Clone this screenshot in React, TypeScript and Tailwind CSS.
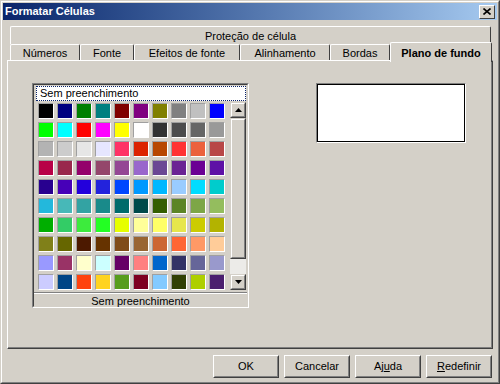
const swatches: string[][] = [
  ['#000000', '#000080', '#008000', '#008080', '#800000', '#800080', '#808000', '#808080', '#c0c0c0', '#0000ff'],
  ['#00ff00', '#00ffff', '#ff0000', '#ff00ff', '#ffff00', '#ffffff', '#333333', '#4c4c4c', '#666666', '#999999'],
  ['#b3b3b3', '#cccccc', '#e6e6e6', '#e6e6ff', '#ff3366', '#dc2300', '#b84700', '#ff3333', '#eb613d', '#b84747'],
  ['#b80047', '#99284c', '#94006b', '#94476b', '#944794', '#9966cc', '#6b4794', '#6b2394', '#6b0094', '#5e11a6'],
  ['#28008f', '#4700b8', '#2300dc', '#2323dc', '#0047ff', '#0099ff', '#00b8ff', '#99ccff', '#00dcff', '#00cccc'],
  ['#23b8dc', '#47b8b8', '#33a3a3', '#198a8a', '#006b6b', '#004a4a', '#355e00', '#5c8526', '#7da647', '#94bd5e'],
  ['#00ae00', '#33cc66', '#3deb3d', '#23ff23', '#e6ff00', '#ffff99', '#ffff66', '#e6e64c', '#cccc00', '#b3b300'],
  ['#808019', '#666600', '#4c1900', '#663300', '#804c19', '#996633', '#cc6633', '#ff6633', '#ff9966', '#ffcc99'],
  ['#9999ff', '#993366', '#ffffcc', '#ccffff', '#660066', '#ff8080', '#0066cc', '#333366', '#666699', '#9999cc'],
  ['#ccccff', '#004586', '#ff420e', '#ffd320', '#579d1c', '#7e0021', '#83caff', '#314004', '#aecf00', '#4b1f6f'],
];

const tabs = [
  { label: 'Números', w: 'w-[70px]' },
  { label: 'Fonte', w: 'w-[54px]' },
  { label: 'Efeitos de fonte', w: 'w-[106px]' },
  { label: 'Alinhamento', w: 'w-[90px]' },
  { label: 'Bordas', w: 'w-[60px]' },
];

function Arrow({ up }: { up?: boolean }) {
  return (
    <svg width="7" height="4" viewBox="0 0 7 4">
      {up ? <polygon points="0,4 7,4 3.5,0" fill="#000" /> : <polygon points="0,0 7,0 3.5,4" fill="#000" />}
    </svg>
  );
}

function ScrollButton({ up }: { up?: boolean }) {
  return (
    <div className="w-[16px] h-[16px] border border-t-[#d4d0c8] border-l-[#d4d0c8] border-r-[#404040] border-b-[#404040] bg-[#d4d0c8]">
      <div className="w-full h-full border border-t-white border-l-white border-r-[#808080] border-b-[#808080] flex items-center justify-center">
        <Arrow up={up} />
      </div>
    </div>
  );
}

function Button({ children }: { children: React.ReactNode }) {
  return (
    <div className="w-[66px] h-[23px] border border-t-white border-l-white border-r-[#404040] border-b-[#404040]">
      <div className="w-full h-full border border-t-[#d4d0c8] border-l-[#d4d0c8] border-r-[#808080] border-b-[#808080] flex items-center justify-center text-[11px] text-black">
        {children}
      </div>
    </div>
  );
}

export default function App() {
  return (
    <div className="w-[500px] h-[384px] bg-[#d4d0c8] border border-t-[#d4d0c8] border-l-[#d4d0c8] border-r-[#404040] border-b-[#404040] font-['Liberation_Sans'] text-[11px] text-black select-none">
      <div className="h-full border border-t-white border-l-white border-r-[#808080] border-b-[#808080] p-px">
        {/* title bar */}
        <div className="h-[17px] flex items-center justify-between bg-gradient-to-r from-[#0a246a] to-[#a6caf0] pl-[2px] pr-[2px]">
          <span className="text-white font-bold text-[11px] leading-none">Formatar Células</span>
          <div className="w-[16px] h-[14px] bg-[#d4d0c8] border border-t-white border-l-white border-r-[#404040] border-b-[#404040] flex items-center justify-center">
            <svg width="8" height="7" viewBox="0 0 8 7">
              <path d="M0.5 0.5 L7.5 6.5 M7.5 0.5 L0.5 6.5" stroke="#000" strokeWidth="1.6" />
            </svg>
          </div>
        </div>

        <div className="mx-[4px] mt-[6px]">
          {/* back tab row */}
          <div className="ml-[3px] w-[481px] h-[18px] border-t border-l border-r border-t-white border-l-white border-r-[#404040] rounded-t-[2px] flex items-center justify-center leading-none pt-[1px]">
            Proteção de célula
          </div>
          {/* front tab row */}
          <div className="ml-[3px] h-[16px] flex items-end relative z-10">
            {tabs.map((t) => (
              <div
                key={t.label}
                className={`${t.w} h-[16px] border-t border-l border-r border-t-white border-l-white border-r-[#404040] rounded-t-[2px] flex items-center justify-center leading-none pt-[2px]`}
              >
                {t.label}
              </div>
            ))}
            <div className="w-[102px] h-[20px] -mb-[2px] bg-[#d4d0c8] border-t border-l border-r border-t-white border-l-white border-r-[#404040] rounded-t-[2px] flex items-start pt-[5px] justify-center font-bold leading-none">
              Plano de fundo
            </div>
          </div>

          {/* panel */}
          <div className="h-[289px] border border-t-white border-l-white border-r-[#404040] border-b-[#404040]">
            <div className="h-full border-r border-b border-r-[#808080] border-b-[#808080] flex items-start pl-[24px] pt-[22px]">
              {/* palette frame */}
              <div className="w-[217px] h-[225px] border border-t-[#808080] border-l-[#808080] border-r-white border-b-white">
                <div className="h-full border border-t-[#404040] border-l-[#404040] border-r-[#d4d0c8] border-b-[#d4d0c8] flex flex-col">
                  <div className="h-[16px] pl-[2px] pr-[1px] pt-px">
                    <div className="h-[15px] border border-dotted border-[#0a246a] bg-white pl-[3px] flex items-center leading-none text-[11px]">
                      Sem preenchimento
                    </div>
                  </div>
                  <div className="flex pl-[4px] pt-[1px] h-[189px]">
                    <div className="grid grid-cols-10 gap-[3px] pt-[1px]">
                      {swatches.flat().map((c, i) => (
                        <div
                          key={i}
                          className="w-[16px] h-[16px] border border-t-[#a0a0a0] border-l-[#a0a0a0] border-r-white border-b-white"
                          style={{ backgroundColor: c }}
                        />
                      ))}
                    </div>
                    {/* scrollbar */}
                    <div className="ml-[5px] w-[16px] h-[188px] flex flex-col bg-[#ecebe8]">
                      <ScrollButton up />
                      <div className="h-[141px] border border-t-[#d4d0c8] border-l-[#d4d0c8] border-r-[#404040] border-b-[#404040] bg-[#d4d0c8]">
                        <div className="w-full h-full border border-t-white border-l-white border-r-[#808080] border-b-[#808080]" />
                      </div>
                      <div className="flex-1" />
                      <ScrollButton />
                    </div>
                  </div>
                  <div className="mt-[2px] border-t border-t-[#808080]">
                    <div className="border-t border-t-white h-[15px] flex items-center justify-center leading-none">
                      Sem preenchimento
                    </div>
                  </div>
                </div>
              </div>

              {/* preview */}
              <div className="ml-[67px] w-[150px] h-[60px] border border-t-[#808080] border-l-[#808080] border-r-white border-b-white">
                <div className="w-full h-full border border-black bg-white" />
              </div>
            </div>
          </div>

          {/* buttons */}
          <div className="mt-[6px] mr-[1px] flex justify-end gap-[5px]">
            <Button>OK</Button>
            <Button>Cancelar</Button>
            <Button>
              <span>
                Aj<span className="underline">u</span>da
              </span>
            </Button>
            <Button>
              <span>
                <span className="underline">R</span>edefinir
              </span>
            </Button>
          </div>
        </div>
      </div>
    </div>
  );
}
